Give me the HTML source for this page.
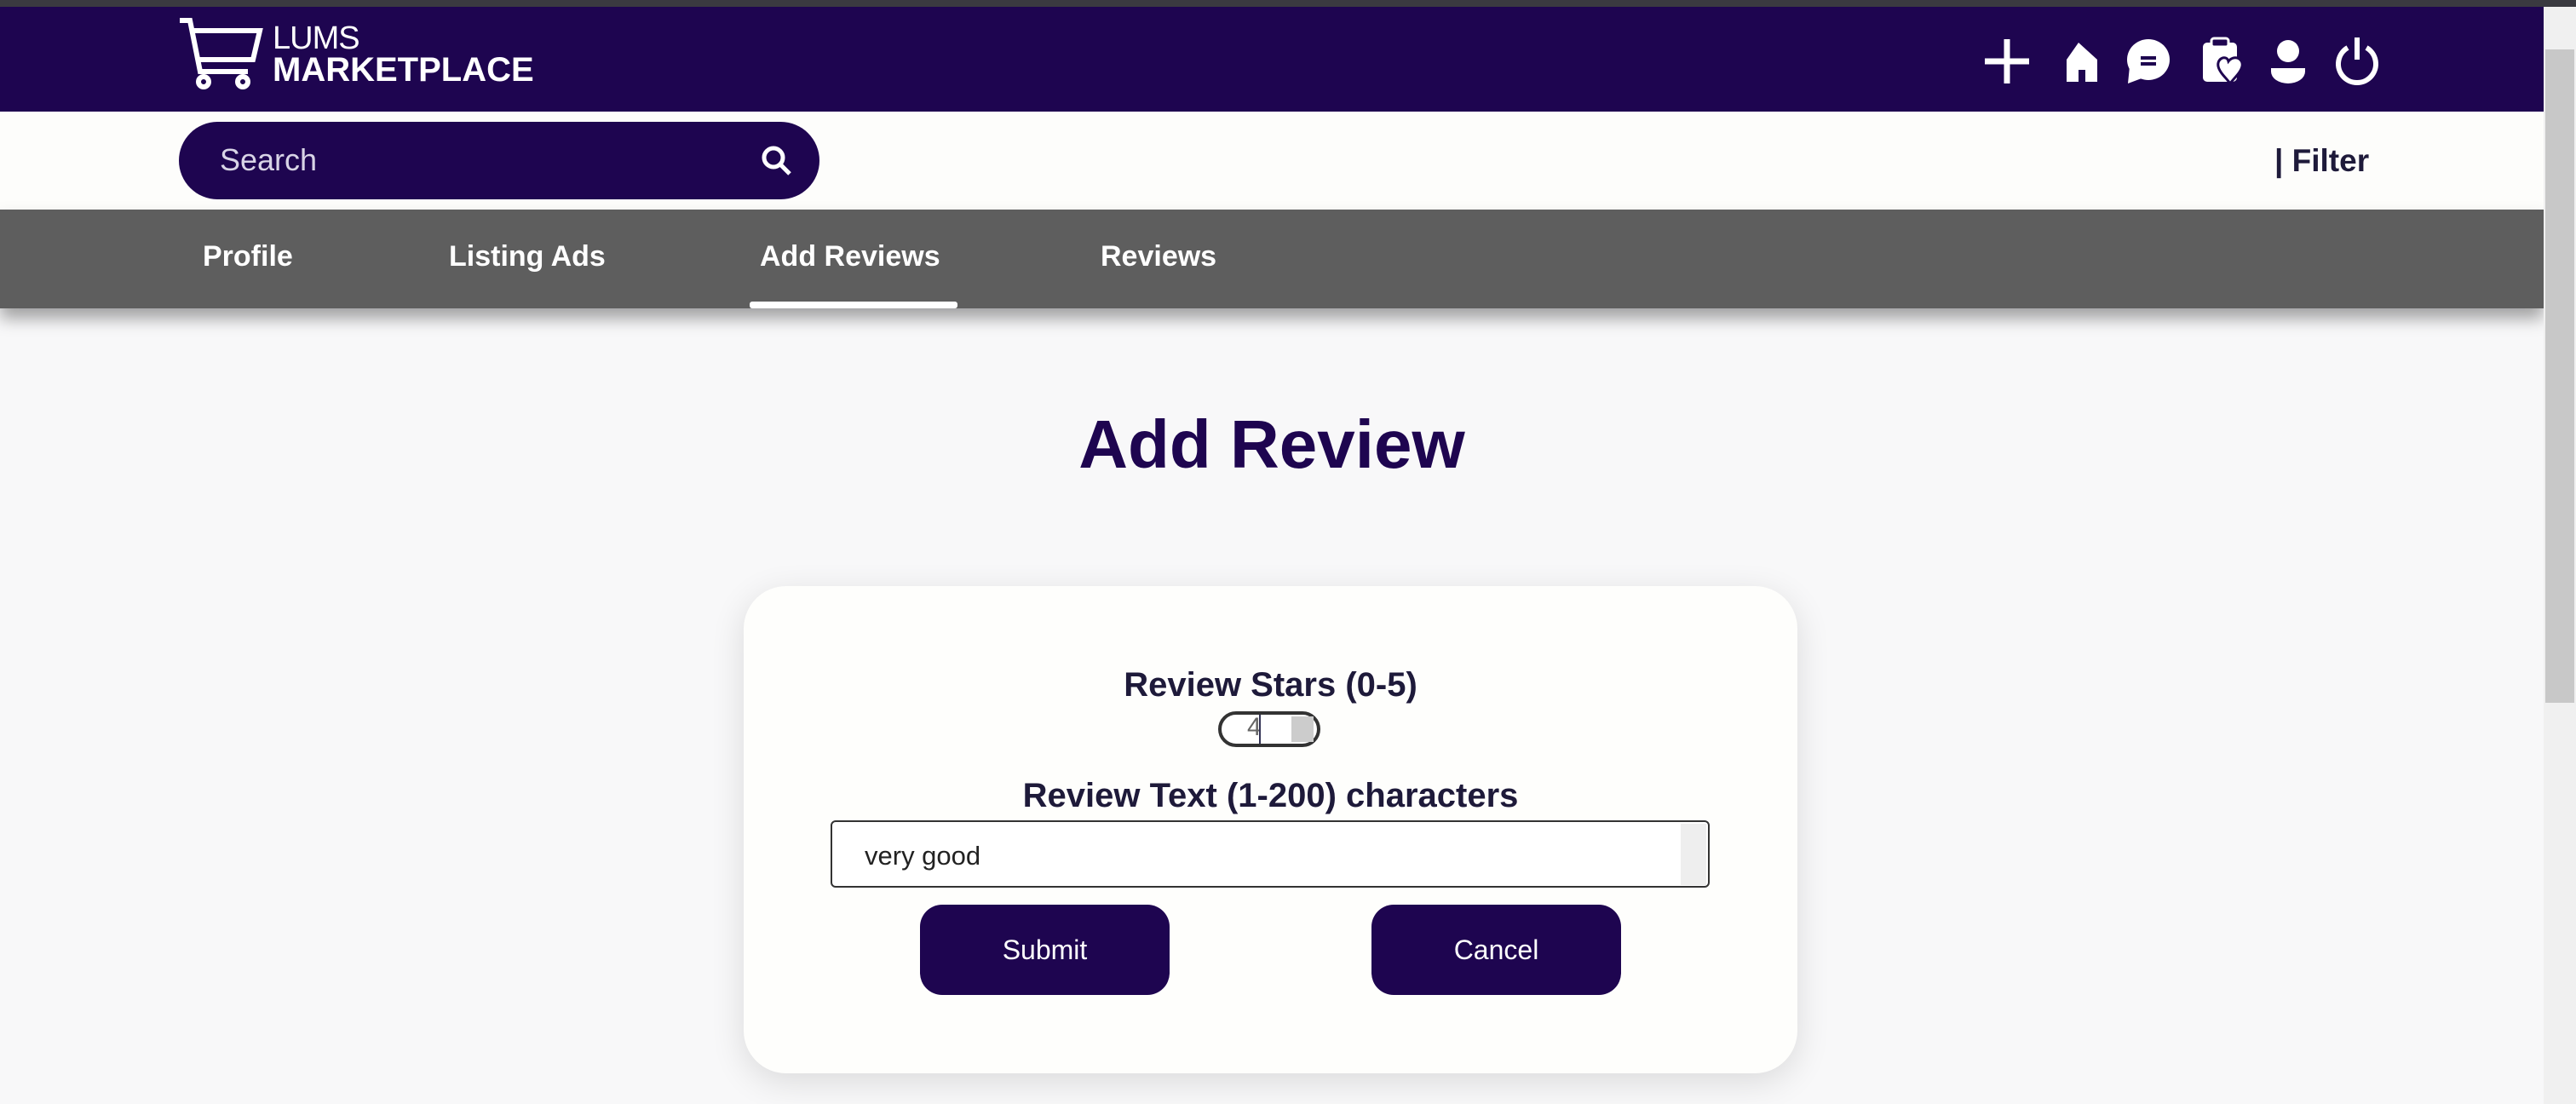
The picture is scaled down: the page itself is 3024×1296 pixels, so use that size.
<!DOCTYPE html>
<html><head><meta charset="utf-8"><style>
*{margin:0;padding:0;box-sizing:border-box}
body{width:3024px;height:1296px;overflow:hidden;background:#f8f8f9;font-family:"Liberation Sans",sans-serif;position:relative}
.abs{position:absolute}
#top{left:0;top:0;width:3024px;height:8px;background:#3a3a40}
#hdr{left:0;top:8px;width:2986px;height:123px;background:#1e0550}
#wbar{left:0;top:131px;width:2986px;height:115px;background:#fdfdfb}
#nav{left:0;top:246px;width:2986px;height:116px;background:#5e5e5e;box-shadow:0 12px 18px rgba(0,0,0,.35)}
.nv{color:#fff;font-weight:bold;font-size:34px;top:282px}
#search{left:210px;top:143px;width:752px;height:91px;border-radius:46px;background:#1e0550}
#search span{position:absolute;left:48px;top:24px;color:#d8d4e6;font-size:36px}
#sb{left:2986px;top:8px;width:38px;height:1288px;background:#f0f0f0}
#thumb{left:2988px;top:58px;width:34px;height:767px;background:#c8c8c8}
h1{position:absolute;left:0;width:2986px;text-align:center;top:476px;font-size:80px;color:#1e0550;font-weight:bold}
#card{left:873px;top:688px;width:1237px;height:572px;background:#fefefc;border-radius:50px;box-shadow:0 10px 40px rgba(0,0,0,.12)}
.lbl{left:873px;width:1237px;text-align:center;color:#1e1a3a;font-size:40px;font-weight:bold}
#num{left:1430px;top:835px;width:120px;height:42px;border:4px solid #333;border-radius:21px;background:#fff}
#ta{left:975px;top:963px;width:1032px;height:79px;border:2px solid #333;border-radius:6px;background:#fff}
.btn{top:1062px;width:293px;height:106px;background:#1e0550;border-radius:26px;color:#fff;font-size:32px;text-align:center;line-height:106px}
</style></head><body>
<div id="top" class="abs"></div>
<div id="hdr" class="abs"></div>
<svg class="abs" style="left:205px;top:18px" width="110" height="90" viewBox="0 0 110 90" fill="none" stroke="#fff" stroke-width="6">
<path d="M6 6 L18 6 L30 66 L86 66"/><path d="M20 18 L100 18 L92 52 L27 52"/><circle cx="34" cy="78" r="6"/><circle cx="80" cy="78" r="6"/></svg>
<div class="abs" style="left:320px;top:24px;color:#fff;font-size:38px;letter-spacing:-1px">LUMS</div>
<div class="abs" style="left:320px;top:60px;color:#fff;font-size:40px;font-weight:bold">MARKETPLACE</div>
<svg class="abs" style="left:2328px;top:42px" width="540" height="60" viewBox="0 0 540 60" fill="#fff">
<path d="M28 4v52M2 30h52" stroke="#fff" stroke-width="7"/>
<path d="M112 8 L134 28 V54 H120 V40 H112 V54 H98 V28 Z"/>
<ellipse cx="194" cy="28" rx="25" ry="24"/><path d="M172 36 L170 56 L186 50Z"/><rect x="185" y="24" width="18" height="4" fill="#1e0550"/><rect x="185" y="31" width="18" height="4" fill="#1e0550"/>
<rect x="258" y="8" width="40" height="46" rx="5"/><rect x="268" y="3" width="20" height="10" rx="3" fill="#1e0550" stroke="#fff" stroke-width="3"/><path d="M288 30 c6-8 18-4 16 6 c-2 8-10 14-14 20 c-4-6-12-12-14-20 c-2-10 10-14 12-6z" stroke="#1e0550" stroke-width="3"/>
<circle cx="358" cy="18" r="13"/><path d="M338 38 h40 v4 a20 14 0 0 1-40 0z"/>
<path d="M428 14 a22 22 0 1 0 22 0" fill="none" stroke="#fff" stroke-width="6"/><path d="M439 2v26" stroke="#fff" stroke-width="6"/></svg>
<div id="wbar" class="abs"></div>
<div id="search" class="abs"><span>Search</span>
<svg style="position:absolute;right:30px;top:26px" width="40" height="40" viewBox="0 0 40 40" fill="none" stroke="#fff" stroke-width="5"><circle cx="16" cy="16" r="11"/><path d="M24 24l11 11"/></svg></div>
<div class="abs" style="left:2670px;top:168px;font-size:37px;font-weight:bold;color:#1e1a3a">| Filter</div>
<div id="nav" class="abs"></div>
<div class="abs nv" style="left:238px">Profile</div>
<div class="abs nv" style="left:527px">Listing Ads</div>
<div class="abs nv" style="left:892px">Add Reviews</div>
<div class="abs nv" style="left:1292px">Reviews</div>
<div class="abs" style="left:880px;top:354px;width:244px;height:8px;background:#fff;border-radius:3px"></div>
<div id="sb" class="abs"></div><div id="thumb" class="abs"></div>
<h1>Add Review</h1>
<div id="card" class="abs"></div>
<div class="abs lbl" style="top:782px">Review Stars (0-5)</div>
<div id="num" class="abs"><span style="position:absolute;left:30px;top:-2px;font-size:30px;color:#666">4</span><div style="position:absolute;left:44px;top:0;width:2px;height:34px;background:#335"></div><div style="position:absolute;right:4px;top:2px;width:26px;height:30px;background:#ccc"></div></div>
<div class="abs lbl" style="top:912px">Review Text (1-200) characters</div>
<div id="ta" class="abs"><span style="position:absolute;left:38px;top:22px;font-size:31px;color:#222">very good</span><div style="position:absolute;right:2px;top:2px;width:30px;height:72px;background:#eee"></div></div>
<div class="abs btn" style="left:1080px">Submit</div>
<div class="abs btn" style="left:1610px">Cancel</div>
</body></html>
